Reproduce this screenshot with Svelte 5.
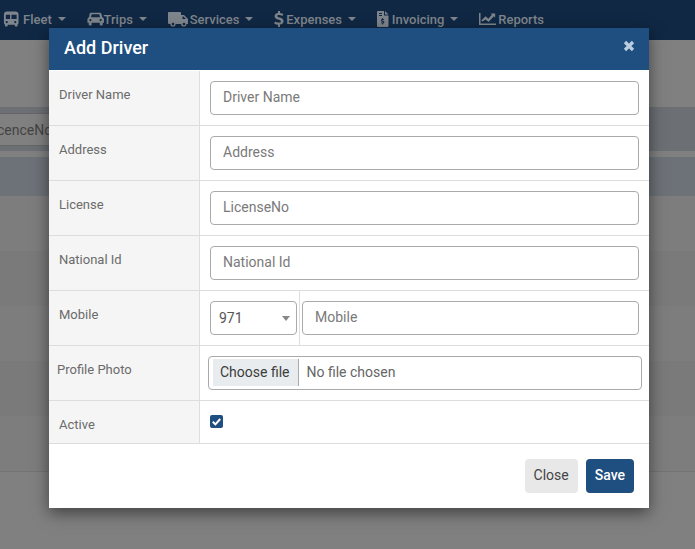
<script>
    const menu = [
        { id: 'bus', box: '1 0 17 16', label: 'Fleet', caret: true },
        { id: 'car', box: '0 0 20 17', label: 'Trips', caret: true },
        { id: 'truck', box: '0 0 20 16', label: 'Services', caret: true },
        { id: 'dollar', box: '1 0 10 16', label: 'Expenses', caret: true },
        { id: 'invoice', box: '0 0 12 16', label: 'Invoicing', caret: true },
        { id: 'chart', box: '0 0 20 16', label: 'Reports', caret: false }
    ];
    const fields = [
        { label: 'Driver Name', placeholder: 'Driver Name' },
        { label: 'Address', placeholder: 'Address' },
        { label: 'License', placeholder: 'LicenseNo' },
        { label: 'National Id', placeholder: 'National Id' }
    ];
</script>

<div class="page">
    <nav class="topbar">
        {#each menu as m}
            <span class="item">
                <svg class="icon {m.id}" viewBox={m.box} aria-hidden="true">
                    {#if m.id === 'bus'}
                        <path fill-rule="evenodd" d="M5 0h9c2 0 3.500 1 3.500 3v9c0 1-.5 1.500-1 1.700V15a1 1 0 0 1-1 1h-1a1 1 0 0 1-1-1v-1H6v1a1 1 0 0 1-1 1H4a1 1 0 0 1-1-1v-1.300c-.5-.2-1-.7-1-1.700V3c0-2 1.500-3 3-3zM4 3.500V8h4.500V3.500zM10 3.500V8h5.500V3.500zM5 10a1.200 1.200 0 1 0 0 2.400A1.200 1.200 0 0 0 5 10zM14 10a1.200 1.200 0 1 0 0 2.400A1.200 1.200 0 0 0 14 10z"/>
                    {:else if m.id === 'car'}
                        <path fill-rule="evenodd" d="M5 1h10c1 0 1.700.6 2 1.500l1 4c1 .4 2 1.300 2 2.500v4h-1.500v2a1 1 0 0 1-1 1h-1.500a1 1 0 0 1-1-1V13H5.500v2a1 1 0 0 1-1 1H3a1 1 0 0 1-1-1V13H.5V9c0-1.200 1-2.100 2-2.500l.5-4C3.300 1.600 4 1 5 1zM5.500 3L4.700 6.500h10.600l-.8-3.500zM4 8.500a1.300 1.300 0 1 0 0 2.600 1.300 1.300 0 0 0 0-2.600zM16 8.500a1.300 1.300 0 1 0 0 2.600 1.300 1.300 0 0 0 0-2.600z"/>
                    {:else if m.id === 'truck'}
                        <path fill-rule="evenodd" d="M1 1h11c.6 0 1 .4 1 1v2h3l4 4v5h-1.600a2.600 2.600 0 0 1-5.200 0H7.600a2.600 2.600 0 0 1-5.200 0H1a1 1 0 0 1-1-1V2c0-.6.4-1 1-1zM14.500 5.500V8H18l-2.500-2.500zM5 11.800a1.300 1.300 0 1 0 0 2.600 1.300 1.300 0 0 0 0-2.600zM16 11.800a1.300 1.300 0 1 0 0 2.600 1.300 1.300 0 0 0 0-2.600z"/>
                    {:else if m.id === 'dollar'}
                        <path d="M5 0h2v2c1.500.1 2.600.6 3.300 1.100L9.400 5C8.500 4.400 7.300 4 6 4c-1.200 0-1.800.4-1.800 1 0 .7.800 1 2.400 1.500 2.400.7 4 1.600 4 3.700 0 1.900-1.400 3.100-3.600 3.400V16H5v-2.300c-1.500-.1-3-.7-3.800-1.300l.9-2c1 .7 2.500 1.200 3.800 1.200 1.200 0 2-.4 2-1.200 0-.7-.7-1.100-2.300-1.600C3.300 8.100 1.600 7.300 1.600 5.100 1.600 3.300 3 2.200 5 2z"/>
                    {:else if m.id === 'invoice'}
                        <path fill-rule="evenodd" d="M1 0h6v4.500h4.500V15a1 1 0 0 1-1 1H1a1 1 0 0 1-1-1V1a1 1 0 0 1 1-1zM8 0l3.500 3.500H8zM2 2v1h3V2zM2 4v1h3V4zM5.200 7v.9c-.8.2-1.300.7-1.300 1.400 0 .9.800 1.200 1.500 1.400.6.2.8.3.8.5 0 .3-.3.4-.7.4-.4 0-.9-.1-1.300-.4l-.4.900c.4.200.9.400 1.400.5v.9h.9v-.9c.8-.2 1.300-.8 1.300-1.500 0-.9-.8-1.200-1.500-1.400-.6-.2-.8-.3-.8-.5 0-.2.200-.3.600-.3.400 0 .800.100 1.100.3l.4-.9c-.3-.2-.700-.300-1.100-.4V7z"/>
                    {:else}
                        <path d="M0 1h1.800v12.200H20V15H0z"/>
                        <path d="M4 11l-1.300-1.200 5-5 3.300 3 4.200-4.800-1.700-1.500H19v5l-1.500-1.700-6.300 6.800-3.400-3.100z"/>
                    {/if}
                </svg>
                {m.label}
                {#if m.caret}<i class="caret"></i>{/if}
            </span>
        {/each}
    </nav>

    <div class="backdrop-bands">
        <div class="band-a"><span class="filter">LicenceNo</span></div>
        <div class="band-b"></div>
        <div class="row-light"></div>
        <div class="row-dark"></div>
        <div class="row-light"></div>
        <div class="row-dark"></div>
        <div class="row-light last"></div>
    </div>

    <div class="modal">
        <header>
            <h4>Add Driver</h4>
            <svg class="close" viewBox="0 0 12 12" aria-label="Close"><path d="M2 2l8 8M10 2l-8 8" fill="none" stroke="#bccde0" stroke-width="3.200"/></svg>
        </header>
        <div class="body">
            {#each fields as f}
                <div class="row">
                    <label>{f.label}</label>
                    <div class="cell"><input type="text" placeholder={f.placeholder} /></div>
                </div>
            {/each}
            <div class="row">
                <label>Mobile</label>
                <div class="cell mobile">
                    <div class="code"><span>971</span><i></i></div>
                    <div class="num"><input type="text" placeholder="Mobile" /></div>
                </div>
            </div>
            <div class="row">
                <label class="shift">Profile Photo</label>
                <div class="cell file-cell">
                    <div class="file"><span class="choose">Choose file</span><span class="none">No file chosen</span></div>
                </div>
            </div>
            <div class="row short">
                <label>Active</label>
                <div class="cell check-cell"><span class="check"><svg viewBox="0 0 13 13"><path d="M2.800 6.800l2.600 2.600 4.800-5.400" fill="none" stroke="#fff" stroke-width="2"/></svg></span></div>
            </div>
        </div>
        <footer>
            <button class="btn-close">Close</button>
            <button class="btn-save">Save</button>
        </footer>
    </div>
</div>

<style>
    :global(body) { margin: 0; background: #808080; font-family: Roboto, "Liberation Sans", sans-serif; overflow: hidden; }
    .page { position: relative; width: 695px; height: 549px; overflow: hidden; background: #808080; }
    .topbar { height: 40px; background: #102844; display: flex; align-items: center; gap: 20.800px; padding: 0 0 2px 3px; color: #7f858c; font-size: 13px; font-weight: 500; box-sizing: border-box; }
    .item { display: flex; align-items: center; white-space: nowrap; }
    .icon { height: 16px; fill: #7f858c; flex: none; }
    .icon.bus { width: 16px; margin-right: 4px; }
    .icon.car { width: 17px; margin-right: 0; }
    .icon.truck { width: 20px; margin-right: 2px; }
    .icon.dollar { width: 10px; margin-right: 2px; }
    .icon.invoice { width: 12px; margin-right: 3px; }
    .icon.chart { width: 17px; margin-right: 2px; }
    .caret { display: inline-block; margin-left: 6px; border-top: 4px solid #7f858c; border-left: 4px solid transparent; border-right: 4px solid transparent; }
    .backdrop-bands { padding-top: 67px; }
    .band-a { height: 44px; background: #6c7074; display: flex; align-items: center; box-sizing: border-box; }
    .filter { display: block; width: 60px; height: 33px; line-height: 33px; box-sizing: border-box; border: 1px solid #666; border-width: 1px 0; background: #808080; color: #444; font-size: 14px; text-indent: -14px; overflow: hidden; white-space: nowrap; }
    .band-b { height: 39px; margin-top: 6px; background: #6d7278; }
    .row-light { height: 55px; background: #7d7d7d; }
    .row-dark { height: 55px; background: #7a7a7a; }
    .row-light.last { border-bottom: 1px solid #737373; }
    .modal { position: absolute; left: 49px; top: 28px; width: 600px; height: 480px; background: #fff; box-shadow: 0 5px 15px rgba(0,0,0,.5); display: flex; flex-direction: column; }
    header { height: 42px; background: #1f4e80; display: flex; align-items: center; justify-content: space-between; padding: 0 15px; flex: none; }
    h4 { margin: -3px 0 0; color: #fff; font-size: 18px; font-weight: 500; }
    .close { width: 12px; height: 12px; margin: -7px -1px 0 0; }
    .body { flex: none; padding-top: 1px; }
    .row { display: flex; height: 55px; border-bottom: 1px solid #ddd; box-sizing: border-box; }
    .row.short { height: 43px; }
    label { width: 151px; flex: none; box-sizing: border-box; background: #f5f5f5; border-right: 1px solid #ddd; padding: 15px 0 0 10px; font-size: 13px; line-height: 18px; color: #6b6b6b; }
    label.shift { padding-left: 8px; }
    .cell { flex: 1; padding: 10px 10px 0; box-sizing: border-box; }
    input { display: block; width: 100%; height: 34px; box-sizing: border-box; border: 1px solid #aaa; border-radius: 4px; padding: 0 12px 2px; font: 14px Roboto, sans-serif; outline: none; }
    input::placeholder { color: #7a7a7a; opacity: 1; }
    .mobile { display: flex; padding: 0; }
    .code { width: 87px; height: 34px; margin: 10px 0 0 10px; box-sizing: border-box; border: 1px solid #aaa; border-radius: 4px; display: flex; align-items: center; justify-content: space-between; padding: 0 6px 0 8px; font-size: 14px; color: #555; flex: none; }
    .code i { border-top: 5px solid #888; border-left: 4px solid transparent; border-right: 4px solid transparent; }
    .num { flex: 1; border-left: 1px solid #ddd; margin-left: 2px; padding: 10px 10px 0 2px; }
    .file-cell { padding: 10px 7px 0 8px; }
    .file { height: 34px; box-sizing: border-box; border: 1px solid #aaa; border-radius: 4px; display: flex; align-items: center; font-size: 14px; padding: 0 4px 1px; }
    .choose { background: #e9ecef; color: #3c3c3c; height: 27px; line-height: 26px; padding: 0 8px 0 7px; border-right: 1px solid #aaa; }
    .none { color: #666; padding: 0 0 2px 8px; }
    .check-cell { padding-top: 14px; }
    .check { display: block; width: 13px; height: 13px; border-radius: 2px; background: #1f4e80; }
    .check svg { display: block; width: 13px; height: 13px; }
    footer { flex: 1; display: flex; justify-content: flex-end; align-items: flex-start; gap: 8px; padding: 15px 15px 0 0; }
    button { height: 34px; border: 0; border-radius: 4px; font: 14px Roboto, sans-serif; padding: 0 9px 2px; }
    .btn-close { background: #e8e8e8; color: #444; }
    .btn-save { background: #1f4e80; color: #fff; font-weight: 500; }
</style>
